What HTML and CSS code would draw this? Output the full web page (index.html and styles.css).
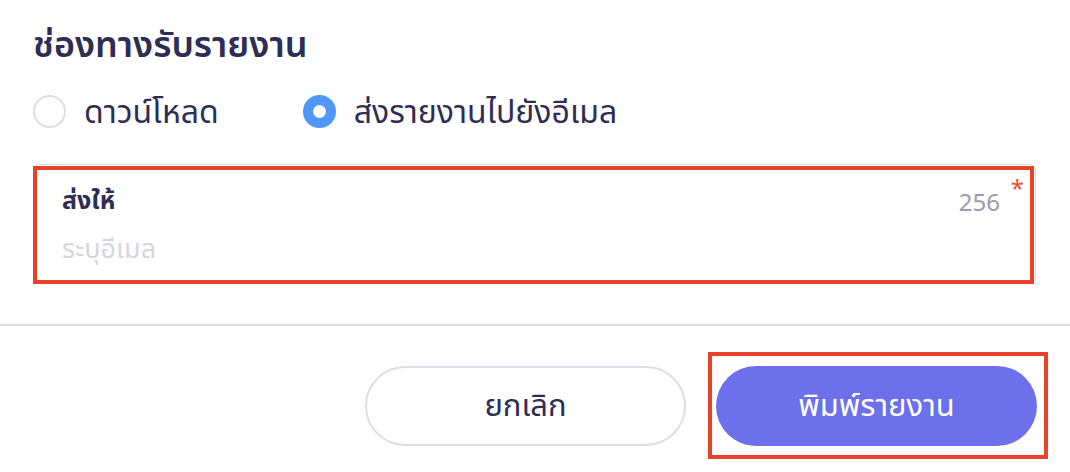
FILE: index.html
```html
<!DOCTYPE html>
<html lang="th">
  <head>
    <meta charset="UTF-8" />
    <meta name="viewport" content="width=device-width, initial-scale=1.0" />
    <title>ช่องทางรับรายงาน</title>
    <link rel="stylesheet" href="styles.css">
  </head>
  <body>
    <div class="dialog">
      <div class="content">
        <h2 class="title">ช่องทางรับรายงาน</h2>
        <div class="options">
          <label class="option">
            <span class="radio"></span>
            <span>ดาวน์โหลด</span>
          </label>
          <label class="option">
            <span class="radio checked"></span>
            <span>ส่งรายงานไปยังอีเมล</span>
          </label>
        </div>
        <div class="field">
          <div class="field-head">
            <span class="field-label">ส่งให้</span>
            <span class="counter">256</span>
          </div>
          <div class="placeholder">ระบุอีเมล</div>
          <span class="required">*</span>
          <span class="mark field-mark"></span>
        </div>
      </div>
      <div class="footer">
        <button class="btn cancel">ยกเลิก</button>
        <button class="btn primary">
          พิมพ์รายงาน
          <span class="mark btn-mark"></span>
        </button>
      </div>
    </div>
  </body>
</html>
```

FILE: styles.css
```css
body {
  margin: 0;
  background: #fff;
  font-family: "Noto Sans", "Noto Sans Thai", "Loma", "Garuda", sans-serif;
  color: #2e2d55;
}

.dialog {
  width: 1070px;
  height: 472px;
  overflow: hidden;
}

.content {
  padding: 22px 34px 0 33px;
  border-bottom: 2px solid #dddbe7;
  height: 302px;
}

.title {
  margin: 0;
  font-size: 36px;
  line-height: 44px;
  font-weight: 600;
}

.options {
  display: flex;
  margin-top: 28px;
  height: 34px;
  align-items: center;

  .option {
    display: flex;
    align-items: center;
    gap: 18px;
    font-size: 32px;
    line-height: 34px;
    margin-right: 84px;
  }
}

.radio {
  width: 33px;
  height: 33px;
  box-sizing: border-box;
  border-radius: 50%;
  border: 2px solid #dddce8;
  background: #fff;

  &.checked {
    border: 10px solid #4f97f8;
  }
}

.field {
  position: relative;
  margin-top: 36px;
  height: 120px;
  box-sizing: border-box;
  border: 1px solid #dcdce6;
  border-radius: 6px;
  padding: 19px 35px 0 28px;

  .field-head {
    display: flex;
    justify-content: space-between;
    align-items: center;
    height: 34px;
  }

  .field-label {
    font-size: 25px;
    font-weight: 700;
  }

  .counter {
    font-size: 24px;
    color: #9b9ab0;
  }

  .placeholder {
    margin-top: 12px;
    font-size: 27px;
    line-height: 36px;
    color: #d6d5e0;
  }

  .required {
    position: absolute;
    top: 6px;
    right: 11px;
    color: #e8562f;
    font-size: 24px;
  }
}

.mark {
  position: absolute;
  border: 4px solid #e8432a;
  pointer-events: none;
}

.field-mark {
  top: 1px;
  left: -1px;
  right: 1px;
  bottom: -1px;
}

.footer {
  display: flex;
  justify-content: flex-end;
  gap: 30px;
  padding: 40px 33px 0 0;

  .btn {
    position: relative;
    width: 321px;
    height: 80px;
    border-radius: 40px;
    font-family: inherit;
    font-size: 31px;
    cursor: pointer;
  }

  .cancel {
    background: #fff;
    border: 2px solid #dddce8;
    color: #2e2d55;
  }

  .primary {
    background: #6c70eb;
    border: none;
    color: #fff;
  }

  .btn-mark {
    top: -14px;
    left: -8px;
    right: -11px;
    bottom: -13px;
  }
}
```
